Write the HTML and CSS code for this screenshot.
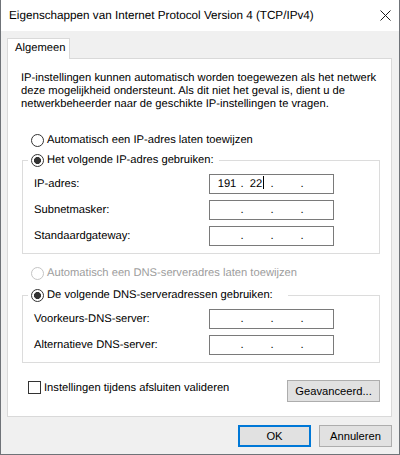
FILE: index.html
```html
<!DOCTYPE html>
<html lang="nl">
<head>
<meta charset="utf-8">
<title>Eigenschappen van Internet Protocol Version 4 (TCP/IPv4)</title>
<link rel="stylesheet" href="styles.css">
</head>
<body>
<div class="window">
  <div class="titlebar">
    <span class="title">Eigenschappen van Internet Protocol Version 4 (TCP/IPv4)</span>
    <svg class="close" width="11" height="11" viewBox="0 0 11 11" aria-label="Sluiten"><path d="M0.5 0.5 L10.5 10.5 M10.5 0.5 L0.5 10.5" stroke="#1a1a1a" stroke-width="1" fill="none"/></svg>
  </div>
  <div class="body">
    <div class="tab">Algemeen</div>
    <div class="panel">
      <p class="desc">IP-instellingen kunnen automatisch worden toegewezen als het netwerk<br>deze mogelijkheid ondersteunt. Als dit niet het geval is, dient u de<br>netwerkbeheerder naar de geschikte IP-instellingen te vragen.</p>

      <div class="radio-row first"><span class="radio"></span><span>Automatisch een IP-adres laten toewijzen</span></div>

      <fieldset class="group">
        <legend class="legend legend-ip"><span class="radio checked"></span><span>Het volgende IP-adres gebruiken:</span></legend>
        <div class="field-row"><span class="label">IP-adres:</span>
          <div class="ip"><span class="oct">191</span><span class="dot">.</span><span class="oct">22<span class="caret"></span></span><span class="dot">.</span><span class="oct"></span><span class="dot">.</span><span class="oct"></span></div>
        </div>
        <div class="field-row"><span class="label">Subnetmasker:</span>
          <div class="ip"><span class="oct"></span><span class="dot">.</span><span class="oct"></span><span class="dot">.</span><span class="oct"></span><span class="dot">.</span><span class="oct"></span></div>
        </div>
        <div class="field-row"><span class="label">Standaardgateway:</span>
          <div class="ip"><span class="oct"></span><span class="dot">.</span><span class="oct"></span><span class="dot">.</span><span class="oct"></span><span class="dot">.</span><span class="oct"></span></div>
        </div>
      </fieldset>

      <div class="radio-row disabled"><span class="radio"></span><span>Automatisch een DNS-serveradres laten toewijzen</span></div>

      <fieldset class="group dns">
        <legend class="legend legend-dns"><span class="radio checked"></span><span>De volgende DNS-serveradressen gebruiken:</span></legend>
        <div class="field-row"><span class="label">Voorkeurs-DNS-server:</span>
          <div class="ip"><span class="oct"></span><span class="dot">.</span><span class="oct"></span><span class="dot">.</span><span class="oct"></span><span class="dot">.</span><span class="oct"></span></div>
        </div>
        <div class="field-row"><span class="label">Alternatieve DNS-server:</span>
          <div class="ip"><span class="oct"></span><span class="dot">.</span><span class="oct"></span><span class="dot">.</span><span class="oct"></span><span class="dot">.</span><span class="oct"></span></div>
        </div>
      </fieldset>

      <div class="bottom-row">
        <div class="check-row"><span class="checkbox"></span><span>Instellingen tijdens afsluiten valideren</span></div>
        <button class="btn adv" type="button">Geavanceerd...</button>
      </div>
    </div>
    <div class="actions">
      <button class="btn ok" type="button">OK</button>
      <button class="btn cancel" type="button">Annuleren</button>
    </div>
  </div>
</div>
</body>
</html>
```
FILE: styles.css
```css
* { box-sizing: border-box; }
html, body { margin: 0; padding: 0; }
body {
  width: 400px;
  height: 455px;
  font-family: "Liberation Sans", Arial, sans-serif;
  font-size: 11.2px;
  text-rendering: geometricPrecision;
  color: #000;
  background: #f0f0f0;
  white-space: nowrap;
}
.window {
  width: 400px;
  height: 455px;
  background: #f0f0f0;
  border: 1px solid #6f7378;
  border-top: none;
  display: flex;
  flex-direction: column;
}
.titlebar {
  flex: none;
  height: 31px;
  background: #fff;
  display: flex;
  align-items: center;
  justify-content: space-between;
  padding: 0 8px 0 8px;
}
.title { font-size: 11.7px; line-height: 14px; }
.close { display: block; }
.body { padding: 7px 7px 0 6px; }
.tab {
  position: relative;
  width: 63px;
  height: 21px;
  margin-bottom: -1px;
  background: #fff;
  border: 1px solid #d9d9d9;
  border-bottom: none;
  padding-left: 7px;
  line-height: 18px;
}
.panel {
  background: #fff;
  border: 1px solid #d9d9d9;
  padding: 13px 0 14px 14px;
}
.desc { margin: 0 0 0 -1px; line-height: 13px; }
.radio-row {
  display: flex;
  align-items: center;
  gap: 3px;
  height: 16px;
  margin-left: 9px;
}
.radio-row.first { margin-top: 21px; }
.radio-row.disabled { margin-top: 11px; color: #9d9d9d; }
.radio {
  flex: none;
  width: 13px;
  height: 13px;
  border: 1px solid #333;
  border-radius: 50%;
  background: #fff;
}
.radio.checked { background: radial-gradient(circle, #333 0 3.2px, #fff 3.8px); }
.disabled .radio { border-color: #c4c4c4; }
.group {
  margin: 4px 0 0 0;
  padding: 6px 0 7px 0;
  width: 358px;
  min-inline-size: 0;
  border: 1px solid #dcdcdc;
}
.group.dns { margin-top: 6px; }
.legend {
  display: flex;
  align-items: center;
  gap: 3px;
  height: 16px;
  margin-left: 5px;
  padding: 0 0 0 3px;
  background: #fff;
}
.legend-ip { width: 191px; }
.legend-dns { width: 260px; }
.field-row {
  display: flex;
  align-items: center;
  height: 20px;
  padding-left: 11px;
}
.field-row + .field-row { margin-top: 6px; }
.label { width: 175px; }
.ip {
  width: 125px;
  height: 20px;
  border: 1px solid #7a7a7a;
  background: #fff;
  display: flex;
  padding-left: 5px;
  line-height: 18px;
  color: #000;
}
.oct { width: 24px; text-align: center; }
.dot { width: 6px; text-align: center; }
.caret {
  display: inline-block;
  width: 1px;
  height: 13px;
  background: #000;
  vertical-align: -2px;
  margin-left: 1px;
}
.bottom-row {
  display: flex;
  justify-content: space-between;
  align-items: flex-start;
  width: 358px;
  margin-top: 17px;
}
.check-row {
  display: flex;
  align-items: center;
  gap: 3px;
  height: 13px;
  margin: 1px 0 0 6px;
}
.checkbox {
  flex: none;
  width: 13px;
  height: 13px;
  border: 1px solid #333;
  background: #fff;
}
.btn {
  height: 22px;
  padding: 0;
  margin: 0;
  font: inherit;
  color: #000;
  background: #e1e1e1;
  border: 1px solid #adadad;
  display: flex;
  align-items: center;
  justify-content: center;
}
.btn.adv { width: 93px; }
.actions {
  display: flex;
  justify-content: flex-end;
  gap: 8px;
  margin-top: 8px;
}
.btn.ok, .btn.cancel { width: 73px; }
.btn.ok { border: 2px solid #0078d7; }
```
